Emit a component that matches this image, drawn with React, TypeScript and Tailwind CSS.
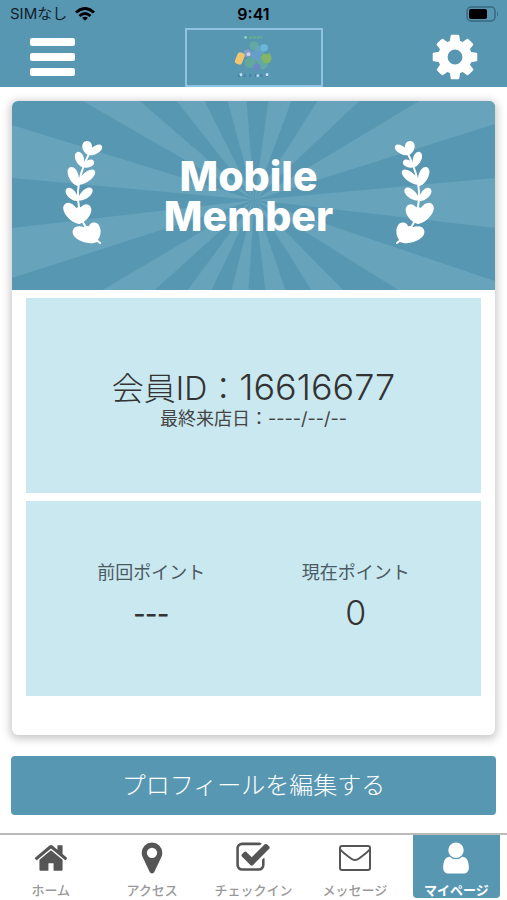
import type { ReactNode } from 'react'

type IconProps = { d: string; className?: string }

type NavItemProps = {
	label: string
	icon: ReactNode
	active?: boolean
}

type PointProps = { label: string; value: string }

const COG =
	'M1152 896q0-106-75-181t-181-75-181 75-75 181 75 181 181 75 181-75 75-181zm512-109v222q0 12-8 23t-20 13l-185 28q-19 54-39 91 35 50 107 138 10 12 10 25t-9 23q-27 37-99 108t-94 71q-12 0-26-9l-138-108q-44 23-91 38-16 136-29 186-7 28-36 28h-222q-14 0-24.500-8.500t-11.500-21.500l-28-184q-49-16-90-37l-141 107q-10 9-25 9-14 0-25-11-126-114-165-168-7-10-7-23 0-12 8-23 15-21 51-66.500t54-70.500q-27-50-41-99l-183-27q-13-2-21-12.500t-8-23.500v-222q0-12 8-23t19-13l186-28q14-46 39-92-40-57-107-138-10-12-10-24 0-10 9-23 26-36 98.500-107.500t94.500-71.500q13 0 26 10l138 107q44-23 91-38 16-136 29-186 7-28 36-28h222q14 0 24.500 8.500t11.500 21.500l28 184q49 16 90 37l142-107q9-9 24-9 13 0 25 10 129 119 165 170 7 8 7 22 0 12-8 23-15 21-51 66.500t-54 70.500q26 50 41 98l183 28q13 2 21 12.500t8 23.500z'
const HOME =
	'M1472 992v480q0 26-19 45t-45 19h-384v-384h-256v384h-384q-26 0-45-19t-19-45v-480q0-1 .5-3t.5-3l575-474 575 474q1 2 1 6zm223-69l-62 74q-8 9-21 11h-3q-13 0-21-7l-692-577-692 577q-12 8-24 7-13-2-21-11l-62-74q-8-10-7-23.500t11-21.500l719-599q32-26 76-26t76 26l244 204v-195q0-14 9-23t23-9h192q14 0 23 9t9 23v408l219 182q10 8 11 21.500t-7 23.500z'
const MARKER =
	'M1152 640q0-106-75-181t-181-75-181 75-75 181 75 181 181 75 181-75 75-181zm256 0q0 109-33 179l-364 774q-16 33-47.500 52t-67.500 19-67.500-19-46.500-52l-365-774q-33-70-33-179 0-212 150-362t362-150 362 150 150 362z'
const CHECK =
	'M1472 930v318q0 119-84.500 203.500t-203.500 84.500h-832q-119 0-203.500-84.500t-84.500-203.500v-832q0-119 84.500-203.500t203.500-84.500h832q63 0 117 25 15 7 18 23 3 17-9 29l-49 49q-10 10-23 10-3 0-9-2-23-6-45-6h-832q-66 0-113 47t-47 113v832q0 66 47 113t113 47h832q66 0 113-47t47-113v-254q0-13 9-22l64-64q10-10 23-10 6 0 12 3 20 8 20 29zm231-489l-814 814q-24 24-57 24t-57-24l-430-430q-24-24-24-57t24-57l110-110q24-24 57-24t57 24l263 263 647-647q24-24 57-24t57 24l110 110q24 24 24 57t-24 57z'
const USER =
	'M1536 1399q0 109-62.500 187t-150.500 78h-854q-88 0-150.500-78t-62.500-187q0-85 8.500-160.500t31.500-152 58.500-131 94-89 134.500-34.500q131 128 313 128t313-128q76 0 134.500 34.500t94 89 58.500 131 31.500 152 8.500 160.500zm-256-887q0 159-112.500 271.500t-271.500 112.500-271.500-112.500-112.500-271.500 112.500-271.500 271.500-112.500 271.500 112.500 112.500 271.500z'

// base x, base y, tip x, tip y, width
const LEAVES = [
	[115, 72, 109, 29, 28],
	[113, 72, 156, 44, 22],
	[98, 110, 81, 63, 24],
	[96, 108, 132, 92, 20],
	[82, 168, 59, 110, 28],
	[80, 164, 134, 120, 26],
	[83, 214, 48, 176, 24],
	[83, 212, 126, 176, 24],
	[90, 284, 44, 222, 36],
	[84, 284, 116, 226, 34],
	[86, 284, 88, 232, 32],
	[145, 338, 68, 302, 40],
	[140, 338, 130, 280, 34],
	[144, 338, 100, 296, 34],
]

// triangles fan out from the middle of the banner
const RAYS = [
	'0,24 0,77',
	'71,0 128,0',
	'165,0 193,0',
	'216,0 235,0',
	'257,0 280,0',
	'306,0 348,0',
	'408,0 484,0 484,23',
	'484,77 484,127',
	'484,180 484,189 387,189',
	'332,189 300,189',
	'274,189 254,189',
	'237,189 220,189',
	'200,189 176,189',
	'143,189 91,189',
	'0,177 0,127',
]

function Icon({ d, className }: IconProps) {
	return (
		<svg viewBox="0 0 1792 1792" fill="currentColor" className={className} aria-hidden="true">
			<path d={d} />
		</svg>
	)
}

function Laurel({ className }: { className?: string }) {
	return (
		<svg viewBox="37 24 123 324" className={className} fill="#fff" aria-hidden="true">
			<path
				d="M151 343Q120 320 100 282Q82 240 83 185Q86 130 118 66"
				fill="none"
				stroke="#fff"
				strokeWidth="6"
				strokeLinecap="round"
			/>
			{LEAVES.map(([x, y, tx, ty, w], i) => {
				const l = Math.hypot(tx - x, ty - y)
				const a = (Math.atan2(tx - x, y - ty) * 180) / Math.PI
				const c = w * 0.72
				return (
					<path
						key={i}
						transform={`translate(${x} ${y}) rotate(${a})`}
						d={`M0 0C${-c} ${-l * 0.25} ${-c} ${-l} 0 ${-l}C${c} ${-l} ${c} ${-l * 0.25} 0 0`}
					/>
				)
			})}
		</svg>
	)
}

function Logo() {
	return (
		<svg viewBox="0 0 138 59" className="h-full w-full" aria-hidden="true">
			<g opacity="0.8">
				<circle cx="60" cy="8" r="1.500" fill="#a5e2b8" />
				<path d="M64 8h14" stroke="#6fb58a" strokeWidth="2" strokeDasharray="3 1" />
				<circle cx="69" cy="17" r="5" fill="#64ae9e" />
				<circle cx="75" cy="22" r="5" fill="#67a9c4" />
				<circle cx="80" cy="19" r="4" fill="#6dbfe0" />
				<circle cx="71" cy="28" r="6" fill="#6b9fd2" />
				<circle cx="62" cy="25" r="4" fill="#8d9fd0" />
				<circle cx="63" cy="26" r="2" fill="#e3e3ef" />
				<circle cx="65" cy="35" r="6" fill="#65ad98" />
				<circle cx="78" cy="36" r="6" fill="#64ae9e" />
				<circle cx="72" cy="40" r="4" fill="#6c89ca" />
				<path d="M76 29l3-4 3 1 4-1 2 5-2 5-6 1z" fill="#8ebc55" />
			</g>
			<rect x="50" y="24" width="8" height="13" rx="3" fill="#f2c66e" transform="rotate(22 54 30)" />
			<path d="M52 49h34" stroke="#477fa9" strokeWidth="3" strokeDasharray="2 4" />
			<circle cx="55" cy="48" r="1.500" fill="#c5e5fa" />
			<circle cx="73" cy="49" r="1.500" fill="#b5dcf5" />
			<circle cx="83" cy="48" r="1.500" fill="#d5e8ff" />
		</svg>
	)
}

function StatusBar() {
	return (
		<div className="grid h-7 grid-cols-3 items-center px-2 text-base leading-7 text-[#10202a]">
			<div className="flex items-center gap-2 pl-0.5">
				<span className="text-[15px]">SIMなし</span>
				<svg viewBox="0 0 20 14" className="h-3.5 w-5" fill="none" stroke="#000" strokeWidth="3" aria-hidden="true">
					<path d="M1 5.500Q10 -2.500 19 5.500" />
					<path d="M4.500 9Q10 4 15.500 9" />
					<path d="M10 13.800L7 10.800Q10 8.500 13 10.800Z" fill="#000" stroke="none" />
				</svg>
			</div>
			<span className="text-center font-semibold text-black">9:41</span>
			<svg viewBox="0 0 33 16" className="h-4 w-[33px] justify-self-end" aria-hidden="true">
				<rect x="1" y="1" width="28" height="14" rx="4" fill="none" stroke="#376a80" strokeWidth="1.500" />
				<rect x="3" y="3" width="18" height="10" rx="2" />
				<path d="M31 5.500q2 2.500 0 5z" fill="#376a80" />
			</svg>
		</div>
	)
}

function Point({ label, value }: PointProps) {
	return (
		<div className="flex flex-col items-center">
			<dt className="text-lg leading-7 text-[#4b5a62]">{label}</dt>
			<dd
				className={
					value === '---'
						? "mt-1 font-['Noto_Sans_CJK_JP',sans-serif] text-[34px] leading-10"
						: 'mt-1 text-[34px] leading-[44px] font-light'
				}
			>
				{value}
			</dd>
		</div>
	)
}

function NavItem({ label, icon, active }: NavItemProps) {
	return (
		<a
			href="#"
			aria-current={active ? 'page' : undefined}
			className={
				active
					? 'mx-[7px] flex h-[63px] flex-col items-center rounded-b bg-[#5897b2] pt-[5px] text-white'
					: 'mx-[7px] flex h-[63px] flex-col items-center pt-[5px] text-[#555]'
			}
		>
			{icon}
			<span
				className={
					active
						? 'text-[13px] leading-4 font-bold whitespace-nowrap'
						: 'text-[13px] leading-4 font-medium whitespace-nowrap text-[#999]'
				}
			>
				{label}
			</span>
		</a>
	)
}

export default function App() {
	return (
		<div className="flex min-h-screen flex-col bg-white font-['Inter','Noto_Sans_CJK_JP',sans-serif] text-[#333]">
			<header className="bg-[#5897b2]">
				<StatusBar />
				<div className="grid h-[59px] grid-cols-[1fr_138px_1fr] items-center">
					<button type="button" aria-label="メニュー" className="mb-0.5 ml-[30px] flex w-[45px] flex-col gap-[7px]">
						<span className="h-2 rounded-xs bg-white" />
						<span className="h-2 rounded-xs bg-white" />
						<span className="h-2 rounded-xs bg-white" />
					</button>
					<div className="h-[59px] border-2 border-[#8fc3e0]">
						<Logo />
					</div>
					<button type="button" aria-label="設定" className="mr-[26px] mb-0.5 justify-self-end text-white">
						<Icon d={COG} className="size-[52px]" />
					</button>
				</div>
			</header>

			<main className="flex-1 px-[11px] pt-3.5">
				<section className="mx-px rounded-md bg-white pb-[39px] shadow-[0_2px_8px_2px_rgba(0,0,0,0.22)]">
					<div className="relative flex h-[189px] items-center justify-between overflow-hidden rounded-t-md bg-[#5897b2] pr-[61px] pb-2 pl-[51px]">
						<svg
							viewBox="0 0 484 189"
							preserveAspectRatio="none"
							className="absolute inset-0 h-full w-full"
							fill="#67a3bb"
							aria-hidden="true"
						>
							{RAYS.map((points) => (
								<polygon key={points} points={`243,99 ${points}`} />
							))}
						</svg>
						<Laurel className="relative h-[108px] w-10" />
						<h1 className="relative mt-2 text-center text-[41px] leading-10 font-extrabold text-white">
							Mobile
							<br />
							Member
						</h1>
						<Laurel className="relative h-[108px] w-10 -scale-x-100" />
					</div>

					<div className="mx-3.5 mt-2 flex h-[195px] flex-col items-center justify-center bg-[#c9e8ef] pt-2">
						<p className="text-[32px] leading-9 font-light">
							会員ID：<span className="text-4xl leading-9">16616677</span>
						</p>
						<p className="text-lg leading-6 text-[#444]">最終来店日：----/--/--</p>
					</div>
					<dl className="mx-3.5 mt-2 grid h-[195px] grid-cols-2 bg-[#c9e8ef] px-[23px] pt-[58px]">
						<Point label="前回ポイント" value="---" />
						<Point label="現在ポイント" value="0" />
					</dl>
				</section>

				<button type="button" className="mt-[21px] h-[59px] w-full rounded bg-[#5897b2] text-2xl font-light text-white">
					プロフィールを編集する
				</button>
			</main>

			<nav className="grid h-[67px] grid-cols-5 border-t-2 border-[#bbb]">
				<NavItem label="ホーム" icon={<Icon d={HOME} className="mb-1.5 size-9 shrink-0" />} />
				<NavItem label="アクセス" icon={<Icon d={MARKER} className="mb-1.5 size-9 shrink-0" />} />
				<NavItem label="チェックイン" icon={<Icon d={CHECK} className="mb-1.5 size-9 shrink-0" />} />
				<NavItem
					label="メッセージ"
					icon={
						<svg
							viewBox="0 0 36 36"
							className="mb-1.5 size-9 shrink-0"
							fill="none"
							stroke="currentColor"
							strokeWidth="2"
							aria-hidden="true"
						>
							<rect x="3" y="6" width="30" height="24" rx="2" />
							<path d="M3 9Q5 12 14 18.500Q18 21.500 22 18.500Q31 12 33 9" />
						</svg>
					}
				/>
				<NavItem label="マイページ" active icon={<Icon d={USER} className="mb-1.5 size-9 shrink-0" />} />
			</nav>
		</div>
	)
}
